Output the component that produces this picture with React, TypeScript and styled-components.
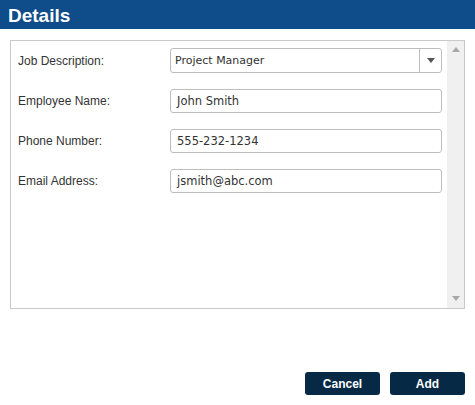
import React from "react";
import styled, { createGlobalStyle } from "styled-components";

const Global = createGlobalStyle`
  html, body { margin: 0; padding: 0; background: #fff; }
  body { font-family: "Liberation Sans", Arial, sans-serif; }
`;

const Page = styled.div`
  width: 475px;
  height: 405px;
  display: flex;
  flex-direction: column;
  background: #fff;
`;

const Header = styled.div`
  height: 29px;
  background: #0f4c8a;
  color: #fff;
  font-family: "Liberation Sans", Arial, sans-serif;
  font-weight: bold;
  font-size: 19px;
  line-height: 31px;
  padding-left: 8px;
  box-sizing: border-box;
`;

const Body = styled.div`
  padding: 11px 10px 0 10px;
  display: flex;
  flex-direction: column;
  flex: 1;
`;

const Panel = styled.div`
  height: 269px;
  border: 1px solid #c9c9c9;
  display: flex;
  box-sizing: border-box;
`;

const Form = styled.div`
  flex: 1;
  padding: 7px 5px 0 7px;
  display: flex;
  flex-direction: column;
  gap: 16px;
`;

const Row = styled.div<{ $select?: boolean }>`
  display: grid;
  grid-template-columns: 152px 1fr;
  align-items: center;
  height: ${(p) => (p.$select ? 25 : 24)}px;
`;

const Label = styled.label`
  font-family: "Liberation Sans", Arial, sans-serif;
  font-size: 12px;
  color: #333;
`;

const Field = styled.div<{ $select?: boolean }>`
  height: ${(p) => (p.$select ? 25 : 24)}px;
  border: 1px solid #bdbdbd;
  border-radius: 3px;
  box-sizing: border-box;
  display: flex;
  align-items: center;
  background: #fff;
  font-family: "DejaVu Sans", Verdana, sans-serif;
  font-size: ${(p) => (p.$select ? 11 : 11.5)}px;
  color: #333;
`;

const FieldText = styled.span<{ $pad: number }>`
  flex: 1;
  padding-left: ${(p) => p.$pad}px;
`;

const Arrow = styled.div`
  width: 21px;
  height: 100%;
  border-left: 1px solid #bdbdbd;
  display: flex;
  align-items: center;
  justify-content: center;
`;

const Scrollbar = styled.div`
  width: 17px;
  background: #f0f0f0;
  display: flex;
  flex-direction: column;
  justify-content: space-between;
  align-items: center;
  padding: 6px 0 7px;
`;

const Footer = styled.div`
  display: flex;
  justify-content: flex-end;
  gap: 10px;
  padding: 0 0 10px 0;
  margin-top: auto;
`;

const Button = styled.button`
  width: 75px;
  height: 23px;
  border: none;
  border-radius: 3px;
  background: #062a45;
  color: #fff;
  font-family: "Liberation Sans", Arial, sans-serif;
  font-weight: bold;
  font-size: 12px;
  padding: 0;
  cursor: pointer;
`;

const Tri = ({ up, color }: { up?: boolean; color: string }) => (
  <svg width="8" height="5" viewBox="0 0 8 5">
    <path d={up ? "M0 5 L4 0 L8 5 Z" : "M0 0 L8 0 L4 5 Z"} fill={color} />
  </svg>
);

const fields = [
  { label: "Employee Name:", value: "John Smith" },
  { label: "Phone Number:", value: "555-232-1234" },
  { label: "Email Address:", value: "jsmith@abc.com" },
];

export default function App() {
  return (
    <Page>
      <Global />
      <Header>Details</Header>
      <Body>
        <Panel>
          <Form>
            <Row $select>
              <Label>Job Description:</Label>
              <Field $select>
                <FieldText $pad={4}>Project Manager</FieldText>
                <Arrow>
                  <Tri color="#555" />
                </Arrow>
              </Field>
            </Row>
            {fields.map((f) => (
              <Row key={f.label}>
                <Label>{f.label}</Label>
                <Field>
                  <FieldText $pad={6}>{f.value}</FieldText>
                </Field>
              </Row>
            ))}
          </Form>
          <Scrollbar>
            <Tri up color="#a8a8a8" />
            <Tri color="#a8a8a8" />
          </Scrollbar>
        </Panel>
        <Footer>
          <Button>Cancel</Button>
          <Button>Add</Button>
        </Footer>
      </Body>
    </Page>
  );
}
